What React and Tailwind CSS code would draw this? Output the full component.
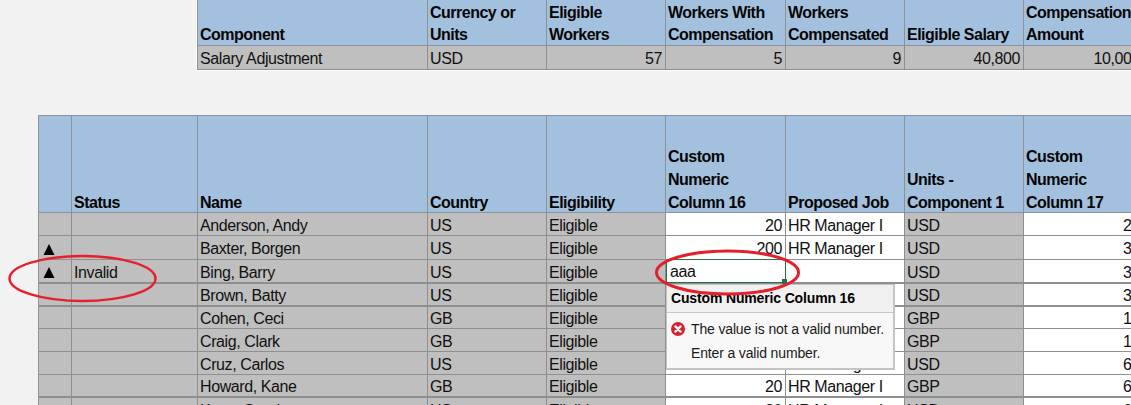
const bodyFont = "font-['Liberation_Sans',sans-serif]";
const headCell = "border-r border-b border-[#8b929a] bg-[#a3c1de] pl-[2px] pr-0 align-bottom text-left font-bold tracking-[-0.5px] text-[#050505] whitespace-pre-line";
const grey = "bg-[#bfbfbf]";
const white = "bg-white";
const cell = "border-r border-[#8f8f8f] pl-[2px] pr-[3px] pt-[3px] pb-0 leading-[18px] text-[#111] whitespace-nowrap overflow-visible";

const rows = [
  { h: "h-[23px]", line: "border-b", name: "Anderson, Andy", country: "US", c16: "20", job: "HR Manager I", unit: "USD", c17: "20" },
  { h: "h-[24px]", line: "border-b", flag: true, name: "Baxter, Borgen", country: "US", c16: "200", job: "HR Manager I", unit: "USD", c17: "30" },
  { h: "h-[24px]", line: "border-b-2", flag: true, status: "Invalid", name: "Bing, Barry", country: "US", editing: true, job: "", unit: "USD", c17: "30" },
  { h: "h-[23px]", line: "border-b-2", name: "Brown, Batty", country: "US", c16: "20", job: "HR Manager I", unit: "USD", c17: "30" },
  { h: "h-[22px]", line: "border-b", name: "Cohen, Ceci", country: "GB", c16: "20", job: "HR Manager I", unit: "GBP", c17: "10" },
  { h: "h-[23px]", line: "border-b", name: "Craig, Clark", country: "GB", c16: "20", job: "HR Manager I", unit: "GBP", c17: "10" },
  { h: "h-[23px]", line: "border-b", name: "Cruz, Carlos", country: "US", c16: "20", job: "HR Manager I", unit: "USD", c17: "60" },
  { h: "h-[23px]", line: "border-b-2", name: "Howard, Kane", country: "GB", c16: "20", job: "HR Manager I", unit: "GBP", c17: "60" },
  { h: "h-[23px]", line: "border-b", name: "Kane, Sandra", country: "US", c16: "20", job: "HR Manager I", unit: "USD", c17: "60" },
];

function WarnFlag() {
  return (
    <svg width="12" height="11" viewBox="0 0 12 11" className="ml-[2px] block">
      <path d="M6 0 L11.5 11 L0.5 11 Z" fill="#000" />
    </svg>
  );
}

function SummaryTable() {
  const widths = ["w-[230px]", "w-[119px]", "w-[119px]", "w-[120px]", "w-[119px]", "w-[119px]", "w-[120px]"];
  const heads = ["Component", "Currency or\nUnits", "Eligible\nWorkers", "Workers With\nCompensation", "Workers\nCompensated", "Eligible Salary", "Compensation\nAmount"];
  const vals = ["Salary Adjustment", "USD", "57", "5", "9", "40,800", "10,000"];
  return (
    <div className="ml-[196px] w-fit border-l border-b border-white">
      <table className="table-fixed w-[946px] border-separate border-spacing-0 border-l border-[#8b929a]">
        <colgroup>
          {widths.map((w, i) => <col key={i} className={w} />)}
        </colgroup>
        <thead>
          <tr className="h-[46px]">
            {heads.map((t) => (
              <th key={t} className={`${headCell} pt-[1px] pb-0 leading-[22px]`}>
                <div className="-mb-[1px]">{t}</div>
              </th>
            ))}
          </tr>
        </thead>
        <tbody>
          <tr className="h-[24px]">
            {vals.map((v, i) => (
              <td key={i} className={`${cell} ${grey} border-b tracking-[-0.4px] ${i > 1 ? "text-right" : "text-left"}`}>{v}</td>
            ))}
          </tr>
        </tbody>
      </table>
    </div>
  );
}

function WorkersTable() {
  const widths = ["w-[33px]", "w-[126px]", "w-[230px]", "w-[119px]", "w-[119px]", "w-[120px]", "w-[119px]", "w-[119px]", "w-[120px]"];
  const heads = ["", "Status", "Name", "Country", "Eligibility", "Custom\nNumeric\nColumn 16", "Proposed Job", "Units -\nComponent 1", "Custom\nNumeric\nColumn 17"];
  return (
    <table className="ml-[38px] mt-[44px] table-fixed w-[1105px] border-separate border-spacing-0 border-t border-l border-[#8f9499]">
      <colgroup>
        {widths.map((w, i) => <col key={i} className={w} />)}
      </colgroup>
      <thead>
        <tr className="h-[97px]">
          {heads.map((t, i) => (
            <th key={i} className={`${headCell} p-0 leading-[23px]`}>
              <div className="-mb-[2px]">{t}</div>
            </th>
          ))}
        </tr>
      </thead>
      <tbody className="tracking-[-0.4px]">
        {rows.map((r) => (
          <tr key={r.name} className={r.h}>
            <td className={`${cell} ${grey} ${r.line}`}>{r.flag && <WarnFlag />}</td>
            <td className={`${cell} ${grey} ${r.line}`}>{r.status}</td>
            <td className={`${cell} ${grey} ${r.line}`}>{r.name}</td>
            <td className={`${cell} ${grey} ${r.line}`}>{r.country}</td>
            <td className={`${cell} ${grey} ${r.line}`}>Eligible</td>
            {r.editing ? (
              <td className={`${white} ${r.line} border-[#8f8f8f] p-0`}>
                <div className="relative -my-[1px] h-[24px] border border-[#217346] pl-[3px] pt-[2px] leading-[20px] text-[#111]">
                  aaa
                  <span className="absolute -bottom-[2px] -right-[2px] h-[5px] w-[5px] bg-[#217346]" />
                </div>
              </td>
            ) : (
              <td className={`${cell} ${white} ${r.line} text-right`}>{r.c16}</td>
            )}
            <td className={`${cell} ${white} ${r.line}`}>{r.job}</td>
            <td className={`${cell} ${grey} ${r.line}`}>{r.unit}</td>
            <td className={`${cell} ${white} ${r.line} text-right`}>{r.c17}</td>
          </tr>
        ))}
      </tbody>
    </table>
  );
}

function ErrorPopup() {
  return (
    <div className="absolute left-[666px] top-[284px] h-[86px] w-[229px] border border-[#c4c4c4] border-b-2 border-r-2 bg-[#f8f8f8] text-[14px] tracking-[-0.15px] text-[#1a1a1a]">
      <div className="h-[28px] border-b border-[#c8c8c8] bg-[#f0f0f0] pl-[4px] font-bold leading-[26px] text-black">
        Custom Numeric Column 16
      </div>
      <div className="flex items-center gap-[6px] pl-[4px] pt-[6px] leading-[20px]">
        <svg width="14" height="14" viewBox="0 0 14 14" className="shrink-0">
          <circle cx="7" cy="7" r="7" fill="#d9202f" />
          <path d="M4.4 4.4 L9.6 9.6 M9.6 4.4 L4.4 9.6" stroke="#fff" strokeWidth="2.2" strokeLinecap="round" />
        </svg>
        <span className="whitespace-nowrap">The value is not a valid number.</span>
      </div>
      <div className="pl-[24px] pt-[4px] leading-[20px]">Enter a valid number.</div>
    </div>
  );
}

function Callouts() {
  return (
    <svg width="1131" height="405" className="pointer-events-none absolute left-0 top-0">
      <ellipse cx="82.5" cy="278.5" rx="73" ry="22.5" fill="none" stroke="#e5202e" strokeWidth="2.5" />
      <ellipse cx="727.5" cy="272.5" rx="71" ry="21.5" fill="none" stroke="#e5202e" strokeWidth="3" />
    </svg>
  );
}

export default function App() {
  return (
    <div className={`relative h-[405px] w-[1131px] overflow-hidden bg-[#f2f2f2] text-[16px] ${bodyFont}`}>
      <SummaryTable />
      <WorkersTable />
      <ErrorPopup />
      <Callouts />
    </div>
  );
}
